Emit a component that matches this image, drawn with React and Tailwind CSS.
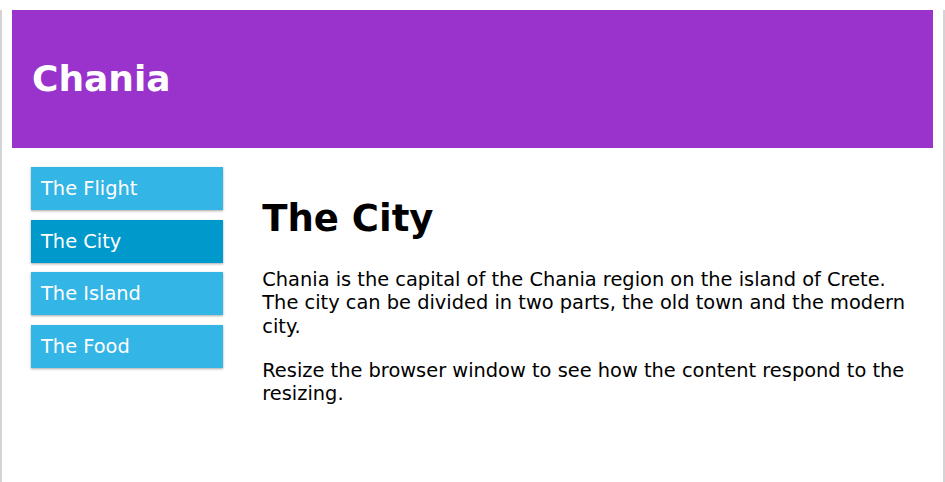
export default function App() {
  const items = ["The Flight", "The City", "The Island", "The Food"];
  const active = "The City";

  return (
    <div className="min-h-screen bg-white border-x-2 border-[#d4d4d4] font-['DejaVu_Sans',sans-serif] text-black">
      {/* HEADER */}
      <div className="mx-[10px] mt-[10px] h-[138px] bg-[#9933cc] pl-[20px] pt-[48px]">
        <h1 className="text-[36px] leading-[42px] font-bold text-white">Chania</h1>
      </div>

      {/* BODY */}
      <div className="mx-[10px] flex">
        <div className="w-1/4 px-[19px] pt-[19px]">
          <ul>
            {items.map((item) => (
              <li
                key={item}
                className={`mb-[9.3px] px-[10px] py-[10px] text-[19.4px] leading-[23.3px] text-white shadow-[0_1px_3px_rgba(0,0,0,0.12),0_1px_2px_rgba(0,0,0,0.24)] ${
                  item === active ? "bg-[#0099cc]" : "bg-[#33b5e5]"
                }`}
              >
                {item}
              </li>
            ))}
          </ul>
        </div>

        <div className="w-3/4 pl-[20px] pr-[20px] pt-[49px]">
          <h1 className="text-[37px] leading-[43px] font-bold">The City</h1>
          <p className="mt-[28px] text-[19.4px] leading-[23.3px]">
            Chania is the capital of the Chania region on the island of Crete. The city can be divided in two parts, the old town and the modern city.
          </p>
          <p className="mt-[21px] text-[19.4px] leading-[23.3px]">
            Resize the browser window to see how the content respond to the resizing.
          </p>
        </div>
      </div>
    </div>
  );
}
